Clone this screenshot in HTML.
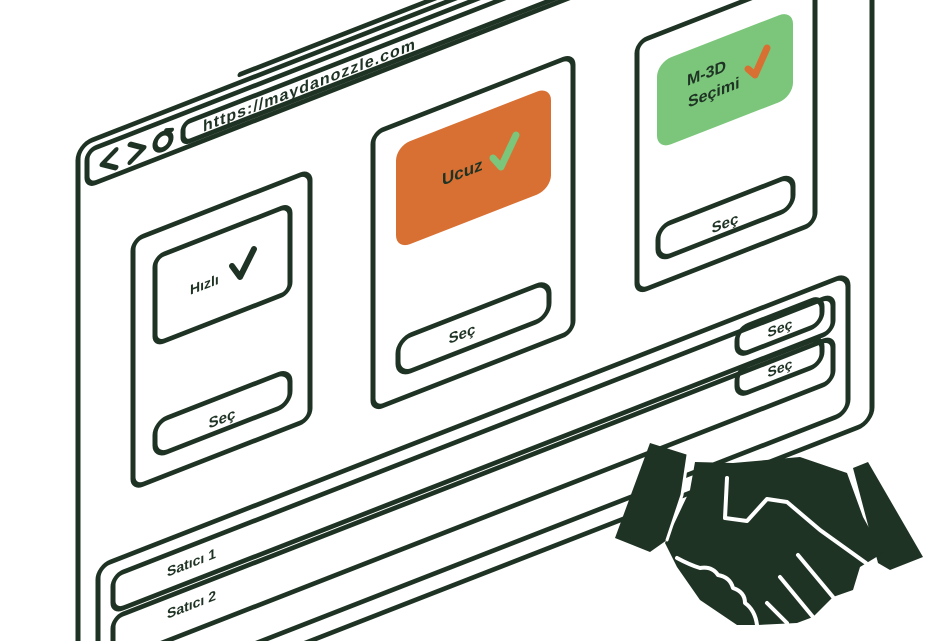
<!DOCTYPE html>
<html><head><meta charset="utf-8"><style>
html,body{margin:0;padding:0;background:#fff;width:947px;height:641px;overflow:hidden}
svg{display:block}
text{font-family:"Liberation Sans",sans-serif;font-weight:bold;fill:#1f3324}
</style></head><body>
<svg width="947" height="641" viewBox="0 0 947 641" xmlns="http://www.w3.org/2000/svg">
<g transform="matrix(1,-0.39,0,1,0,0)" fill="none" stroke="#1f3324" stroke-width="5" stroke-linejoin="round" stroke-linecap="round">
  <rect x="78" y="176" width="794" height="586" rx="14"/>
  <line x1="240" y1="168" x2="872" y2="168"/>
  <rect x="87" y="185" width="800" height="35" rx="9"/>
  <rect x="183" y="195" width="700" height="20" rx="7"/>
  <text x="203" y="211" font-size="16" letter-spacing="1" stroke="none">https://maydanozzle.com</text>
  <path d="M116,195 L102,204 L116,213"/>
  <path d="M130,195 L144,204 L130,213"/>
  <circle cx="163" cy="205" r="8" stroke-width="5"/>
  <path d="M166,195 L172,197" stroke-width="4"/>

  <rect x="133" y="292" width="177" height="248" rx="10"/>
  <rect x="155" y="318" width="135" height="87" rx="9"/>
  <text x="190" y="369" font-size="14" stroke="none">Hızlı</text>
  <rect x="155" y="483" width="135" height="34" rx="12"/>
  <text x="222" y="510" font-size="15" text-anchor="middle" stroke="none">Seç</text>

  <rect x="373" y="279" width="200" height="276" rx="10"/>
  <rect x="396" y="301" width="155" height="103" rx="14" fill="#d87033" stroke="none"/>
  <text x="442" y="358" font-size="17" stroke="none">Ucuz</text>
  <rect x="398" y="495" width="151" height="36" rx="13"/>
  <text x="462" y="519" font-size="15" text-anchor="middle" stroke="none">Seç</text>

  <rect x="637" y="291" width="178" height="250" rx="10"/>
  <rect x="657" y="319" width="136" height="87" rx="14" fill="#7bc67a" stroke="none"/>
  <text x="687" y="354" font-size="16" stroke="none">M-3D</text>
  <text x="688" y="376" font-size="16" stroke="none">Seçimi</text>
  <rect x="658" y="484" width="135" height="33" rx="12"/>
  <text x="725" y="511" font-size="15" text-anchor="middle" stroke="none">Seç</text>

  <rect x="98" y="605" width="750" height="138" rx="12"/>
  <rect x="113" y="620" width="720" height="36" rx="10"/>
  <rect x="113" y="662" width="720" height="44" rx="10"/>
  <rect x="737" y="617" width="85" height="27" rx="11"/>
  <text x="780" y="637" font-size="14" text-anchor="middle" stroke="none">Seç</text>
  <rect x="737" y="657" width="85" height="27" rx="11"/>
  <text x="780" y="677" font-size="14" text-anchor="middle" stroke="none">Seç</text>
  <text x="167" y="642" font-size="14" stroke="none">Satıcı 1</text>
  <text x="167" y="684" font-size="14" stroke="none">Satıcı 2</text>
</g>
<g fill="none" stroke-linecap="round" stroke-linejoin="round">
  <path d="M232,266 L240,277 L254,249" stroke="#1f3324" stroke-width="6"/>
  <path d="M493,158 L501,167 L516,135" stroke="#7bc67a" stroke-width="7"/>
  <path d="M748,69 L755,75 L767,48" stroke="#d87033" stroke-width="7"/>
</g>
<g fill="#1f3324">
  <polygon points="650,443 688,455 682,495 667,540 650,552 615,538"/>
  <polygon points="853,468 868,462 923,557 890,570 878,563"/>
  <polygon points="695,462 733,463 800,457 847,473 863,517 883,553 860,567 853,590 833,597 813,617 797,623 757,625 737,625 700,600 677,567 665,543 690,490"/>
</g>
<g fill="none" stroke="#fff" stroke-width="4" stroke-linecap="round" stroke-linejoin="round">
  <path d="M727,478 L725,518 L747,521 L767,499 L787,502 L820,530 L866,563"/>
  <path d="M798,555 L833,597"/>
  <path d="M780,577 L813,617"/>
  <path d="M767,603 L787,623"/>
  <path d="M677,558 Q690,565 700,568 Q712,566 718,575 Q730,577 733,588 Q745,592 745,603 Q755,610 757,625"/>
  <path d="M688,455 L682,495 L667,540" stroke-width="3"/>
</g>
</svg>
</body></html>
